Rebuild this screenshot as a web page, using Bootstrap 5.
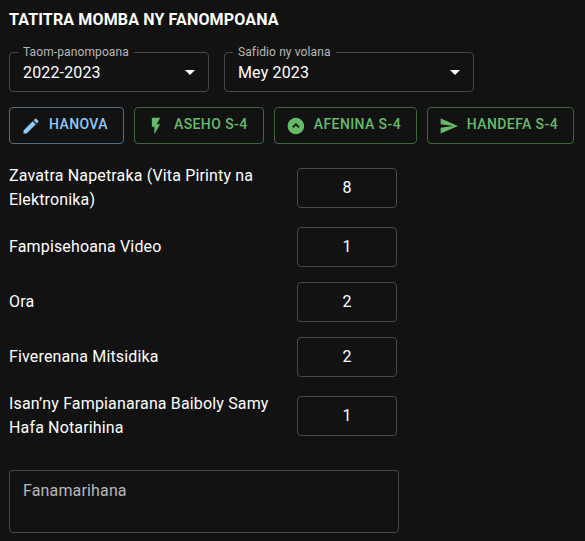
<!DOCTYPE html>
<html lang="mg" data-bs-theme="dark">
<head>
<meta charset="utf-8">
<meta name="viewport" content="width=device-width, initial-scale=1">
<title>Tatitra momba ny fanompoana</title>
<link href="https://cdn.jsdelivr.net/npm/bootstrap@5.3.0/dist/css/bootstrap.min.css" rel="stylesheet">
<style>
  body {
    background: #121212;
    color: #fff;
    font-family: Roboto, "Liberation Sans", sans-serif;
    font-size: 16px;
    line-height: 24px;
    letter-spacing: .15px;
    overflow: hidden;
  }
  .report { padding: 8px 9px 0; }
  .report-title { font-size: 16px; line-height: 24px; font-weight: 700; letter-spacing: .15px; margin-bottom: 20px; }
  .pickers { gap: 15px; }
  .picker { height: 40px; }
  .picker-year { width: 200px; }
  .picker-month { width: 250px; }
  .report .form-select, .report .form-control {
    background: transparent;
    border: 1px solid #484848;
    border-radius: 4px;
    color: #fff;
    font-size: 16px;
    line-height: 23px;
    letter-spacing: .15px;
    height: 40px;
  }
  .report .form-select { padding: 8px 32px 7px 13px; }
  .picker-label {
    left: 9px; top: -8px;
    padding: 0 5px;
    background: #121212;
    color: #b8b8b8;
    font-size: 12px;
    line-height: 17px;
    letter-spacing: .11px;
    white-space: nowrap;
  }
  .picker-arrow { right: 7px; top: 8px; width: 24px; height: 24px; pointer-events: none; }
  .actions { gap: 10px; margin: 15px 0 20px; height: 37px; }
  .action {
    --bs-btn-padding-x: 15px;
    --bs-btn-padding-y: 5px;
    --bs-btn-border-radius: 4px;
    --bs-btn-font-size: 14px;
    --bs-btn-font-weight: 500;
    --bs-btn-line-height: 24px;
    letter-spacing: .4px;
    padding-left: 11px;
    height: 37px;
    white-space: nowrap;
  }
  .action span { line-height: 20px; padding-bottom: 3px; }
  .action svg { width: 20px; height: 20px; margin-right: 8px; fill: currentColor; }
  .action-edit { --bs-btn-color: #90caf9; --bs-btn-border-color: #516e85; width: 115px; }
  .action-green { --bs-btn-color: #66bb6a; --bs-btn-border-color: #3c673e; }
  .w-show { width: 130px; } .w-hide { width: 143px; } .w-send { width: 147px; }
  .entries { gap: 15px; width: 388px; }
  .entry-label { width: 288px; padding-right: 10px; }
  .report .entry-value { width: 100px; text-align: center; padding: 7px 13px 8px; }
  .report .notes { width: 390px; height: 63px; margin-top: 30px; padding: 8px 13px; resize: none; line-height: 23px; }
  .report .notes::placeholder { color: #b8b8b8; opacity: 1; }
</style>
</head>
<body>
<main class="report">
  <h1 class="report-title">TATITRA MOMBA NY FANOMPOANA</h1>
  <div class="d-flex pickers">
    <div class="picker picker-year position-relative">
      <select class="form-select" id="year"><option>2022-2023</option></select>
      <label class="picker-label position-absolute" for="year">Taom-panompoana</label>
      <svg class="picker-arrow position-absolute" viewBox="0 0 24 24" fill="#fff"><path d="M7 10l5 5 5-5z"/></svg>
    </div>
    <div class="picker picker-month position-relative">
      <select class="form-select" id="month"><option>Mey 2023</option></select>
      <label class="picker-label position-absolute" for="month">Safidio ny volana</label>
      <svg class="picker-arrow position-absolute" viewBox="0 0 24 24" fill="#fff"><path d="M7 10l5 5 5-5z"/></svg>
    </div>
  </div>
  <div class="d-flex actions">
    <button type="button" class="btn action action-edit d-flex align-items-center"><svg viewBox="0 0 24 24"><path d="M3 17.25V21h3.75L17.81 9.94l-3.75-3.75L3 17.25zM20.71 7.04c.39-.39.39-1.02 0-1.41l-2.34-2.34a.9959.9959 0 0 0-1.41 0l-1.83 1.83 3.75 3.75 1.83-1.83z"/></svg><span>HANOVA</span></button>
    <button type="button" class="btn action action-green w-show d-flex align-items-center"><svg viewBox="0 0 24 24"><path d="M7 2v11h3v9l7-12h-4l4-8z"/></svg><span>ASEHO S-4</span></button>
    <button type="button" class="btn action action-green w-hide d-flex align-items-center"><svg viewBox="0 0 24 24"><path d="M12 2C6.48 2 2 6.48 2 12s4.48 10 10 10 10-4.48 10-10S17.52 2 12 2zm3.08 12.41L12 11.33l-3.08 3.08L7.5 13 12 8.5l4.5 4.5-1.42 1.41z"/></svg><span>AFENINA S-4</span></button>
    <button type="button" class="btn action action-green w-send d-flex align-items-center"><svg viewBox="0 0 24 24"><path d="M2.01 21L23 12 2.01 3 2 10l15 2-15 2z"/></svg><span>HANDEFA S-4</span></button>
  </div>
  <div class="d-flex flex-column entries">
    <div class="d-flex align-items-center"><label class="entry-label" for="e1">Zavatra Napetraka (Vita Pirinty na Elektronika)</label><input class="form-control entry-value" id="e1" value="8"></div>
    <div class="d-flex align-items-center"><label class="entry-label" for="e2">Fampisehoana Video</label><input class="form-control entry-value" id="e2" value="1"></div>
    <div class="d-flex align-items-center"><label class="entry-label" for="e3">Ora</label><input class="form-control entry-value" id="e3" value="2"></div>
    <div class="d-flex align-items-center"><label class="entry-label" for="e4">Fiverenana Mitsidika</label><input class="form-control entry-value" id="e4" value="2"></div>
    <div class="d-flex align-items-center"><label class="entry-label" for="e5">Isan’ny Fampianarana Baiboly Samy Hafa Notarihina</label><input class="form-control entry-value" id="e5" value="1"></div>
  </div>
  <textarea class="form-control notes" placeholder="Fanamarihana" aria-label="Fanamarihana"></textarea>
</main>
<script src="https://cdn.jsdelivr.net/npm/bootstrap@5.3.0/dist/js/bootstrap.bundle.min.js"></script>
</body>
</html>
